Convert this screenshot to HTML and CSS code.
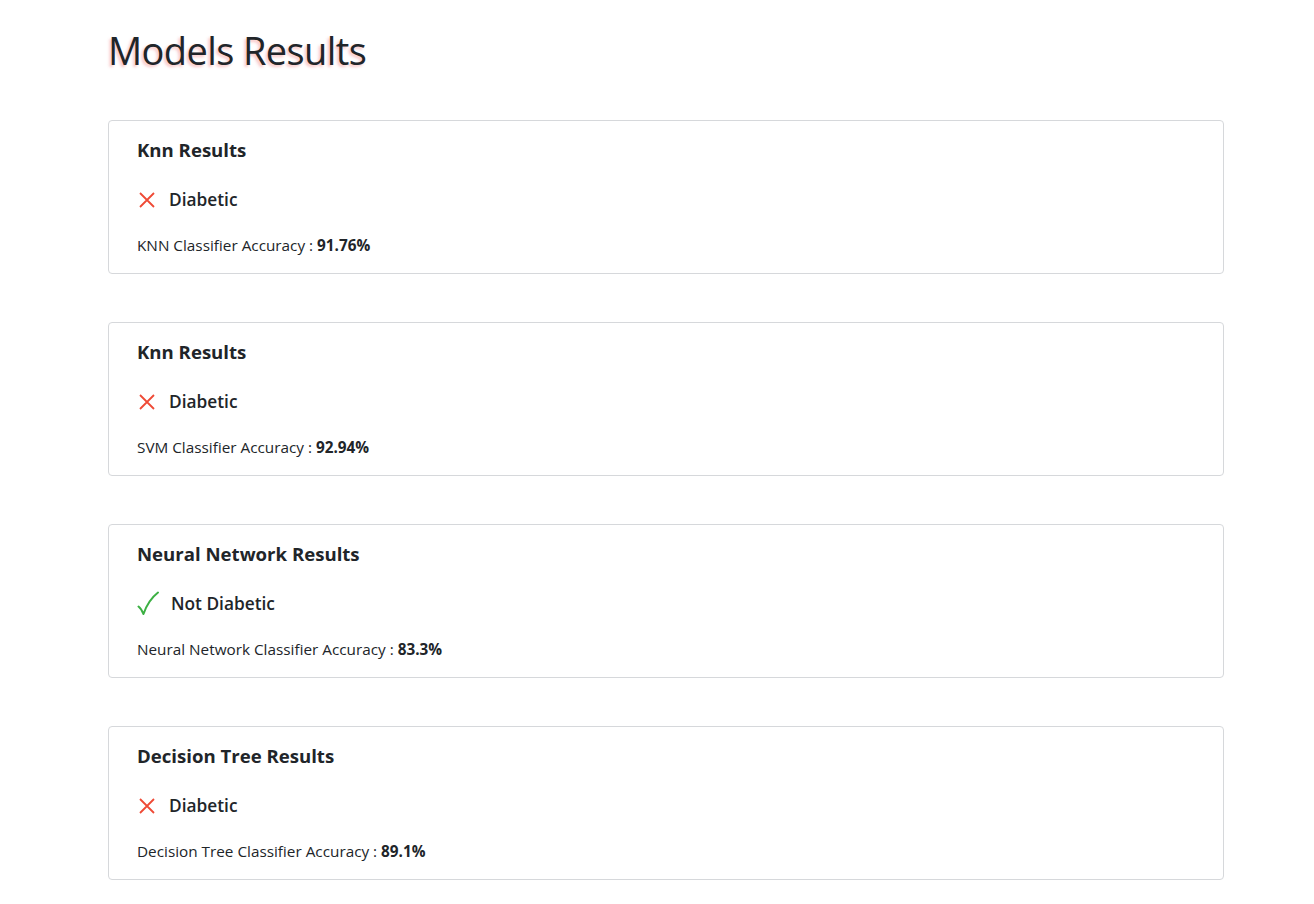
FILE: index.html
```html
<!DOCTYPE html>
<html>
<head>
<meta charset="utf-8">
<link rel="stylesheet" href="styles.css">
</head>
<body>
<main class="container">
  <h1 class="page-title">Models Results</h1>

  <div class="card-list">
    <section class="card">
      <h2 class="card-title">Knn Results</h2>
      <div class="verdict">
        <svg class="icon" width="20" height="20" viewBox="0 0 20 20"><path d="M3 3L17 17M17 3L3 17" stroke="#ef4a36" stroke-width="1.8" fill="none"/></svg>
        <span>Diabetic</span>
      </div>
      <p class="accuracy">KNN Classifier Accuracy : <b>91.76%</b></p>
    </section>

    <section class="card">
      <h2 class="card-title">Knn Results</h2>
      <div class="verdict">
        <svg class="icon" width="20" height="20" viewBox="0 0 20 20"><path d="M3 3L17 17M17 3L3 17" stroke="#ef4a36" stroke-width="1.8" fill="none"/></svg>
        <span>Diabetic</span>
      </div>
      <p class="accuracy">SVM Classifier Accuracy : <b>92.94%</b></p>
    </section>

    <section class="card">
      <h2 class="card-title">Neural Network Results</h2>
      <div class="verdict">
        <svg class="icon" width="22" height="26" viewBox="0 0 22 26"><path d="M1.5 15.5C3.5 17 5 19.5 6.5 23C9.5 14 14 7 21 1.5" stroke="#3cb043" stroke-width="2" fill="none" stroke-linecap="round" stroke-linejoin="round"/></svg>
        <span>Not Diabetic</span>
      </div>
      <p class="accuracy">Neural Network Classifier Accuracy : <b>83.3%</b></p>
    </section>

    <section class="card">
      <h2 class="card-title">Decision Tree Results</h2>
      <div class="verdict">
        <svg class="icon" width="20" height="20" viewBox="0 0 20 20"><path d="M3 3L17 17M17 3L3 17" stroke="#ef4a36" stroke-width="1.8" fill="none"/></svg>
        <span>Diabetic</span>
      </div>
      <p class="accuracy">Decision Tree Classifier Accuracy : <b>89.1%</b></p>
    </section>
  </div>
</main>
</body>
</html>
```
FILE: styles.css
```css
* { box-sizing: border-box; }
html, body { margin: 0; padding: 0; background: #fff; }
body {
  font-family: "Open Sans", "Noto Sans", "Liberation Sans", sans-serif;
  color: #212529;
}
.container {
  width: 1116px;
  margin-left: 108px;
  padding-top: 24px;
  padding-bottom: 24px;
}
.page-title {
  margin: 0 0 44px 0;
  font-size: 38px;
  font-weight: 400;
  line-height: 52px;
  letter-spacing: -0.6px;
  color: #212529;
  text-shadow: -2px 2px 3px rgba(240, 120, 120, 0.45);
}
.card-list {
  display: flex;
  flex-direction: column;
  gap: 48px;
}
.card {
  border: 1px solid #d6d8db;
  border-radius: 4px;
  padding: 16px 28px 0 28px;
  height: 154px;
}
.card-title {
  margin: 0;
  font-size: 18.6px;
  font-weight: 700;
  line-height: 26px;
}
.verdict {
  display: flex;
  align-items: center;
  gap: 12px;
  margin-top: 24px;
  font-size: 17.3px;
  font-weight: 600;
  line-height: 26px;
}
.verdict .icon { flex: none; }
.accuracy {
  margin: 22px 0 0 0;
  font-size: 15.3px;
  line-height: 20px;
}
.accuracy b { font-weight: 700; }
```
